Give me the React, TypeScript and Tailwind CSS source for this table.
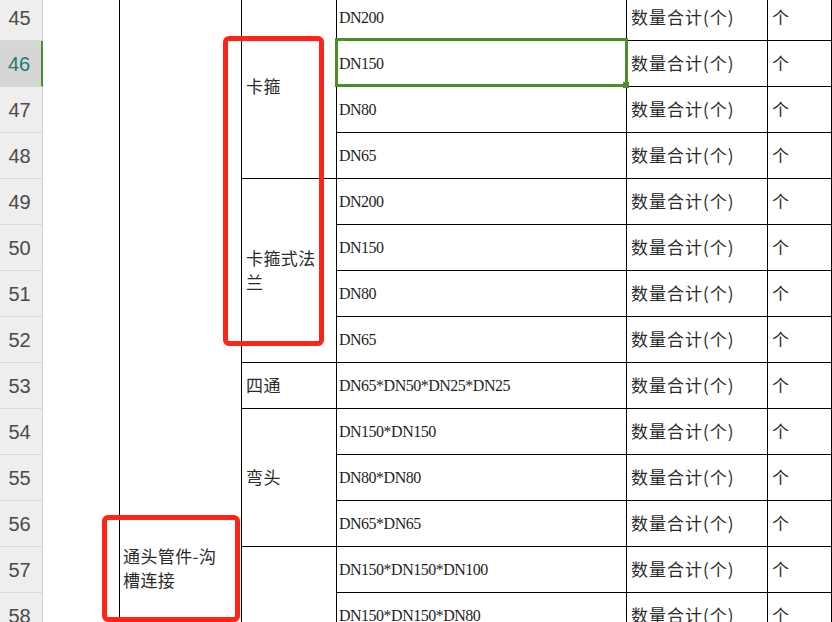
import React from "react";

const ROW_START = [
  "row-start-1",
  "row-start-2",
  "row-start-3",
  "row-start-4",
  "row-start-5",
  "row-start-6",
  "row-start-7",
  "row-start-8",
  "row-start-9",
  "row-start-10",
  "row-start-11",
  "row-start-12",
  "row-start-13",
  "row-start-14",
];

const specs = [
  "DN200",
  "DN150",
  "DN80",
  "DN65",
  "DN200",
  "DN150",
  "DN80",
  "DN65",
  "DN65*DN50*DN25*DN25",
  "DN150*DN150",
  "DN80*DN80",
  "DN65*DN65",
  "DN150*DN150*DN100",
  "DN150*DN150*DN80",
];

const latin = "font-['Liberation_Serif',serif] text-[16px] tracking-[-0.5px] text-[#1f1f1f]";
const cjk = "font-['Noto_Sans_CJK_SC','Liberation_Sans',sans-serif] text-[17px] tracking-[0.4px] text-[#2a2a2a]";
const cjkWide = "font-['Noto_Sans_CJK_SC','Liberation_Sans',sans-serif] text-[17px] tracking-[1px] text-[#2a2a2a]";

export default function App() {
  return (
    <div className="relative w-[832px] h-[622px] overflow-hidden bg-white">
      <div className="grid grid-cols-[43px_77px_122px_95px_290px_141px_64px] grid-rows-[repeat(14,46px)] mt-[-5px]">
        {specs.map((_, i) => {
          const sel = i === 1;
          return (
            <div
              key={"h" + i}
              className={
                "col-start-1 flex items-center justify-center pr-[3px] border-b border-[#d9d9d9] font-['Liberation_Sans',sans-serif] text-[20px] " +
                ROW_START[i] +
                (sel
                  ? " bg-[#d6d6d6] text-[#1d7a70] border-r-2 border-r-[#4a8f28]"
                  : " bg-[#eeeeee] text-[#4a4a4a] border-r border-r-[#d4d4d4]")
              }
            >
              {45 + i}
            </div>
          );
        })}

        <div className="col-start-2 row-start-1 row-span-14 border-r border-black" />

        <div className="col-start-3 row-start-1 row-span-14 border-r border-black flex flex-col pt-[549px] pl-[3px]">
          <div className={cjk + " leading-[24px]"}>
            通头管件-沟
            <br />
            槽连接
          </div>
        </div>

        <div className={"col-start-4 row-start-1 row-span-4 border-r border-b border-black flex items-center pl-[4px] pb-[2px] " + cjk}>
          卡箍
        </div>
        <div className={"col-start-4 row-start-5 row-span-4 border-r border-b border-black flex items-center pl-[4px] pb-[1px] leading-[24px] " + cjk}>
          <div>
            卡箍式法
            <br />兰
          </div>
        </div>
        <div className={"col-start-4 row-start-9 border-r border-b border-black flex items-center pl-[4px] pb-[2px] " + cjk}>
          四通
        </div>
        <div className={"col-start-4 row-start-10 row-span-3 border-r border-b border-black flex items-center pl-[4px] pb-[2px] " + cjk}>
          弯头
        </div>
        <div className="col-start-4 row-start-13 row-span-2 border-r border-black" />

        {specs.map((s, i) => (
          <React.Fragment key={"r" + i}>
            <div className={"col-start-5 border-r border-b border-black flex items-center pl-[2px] " + ROW_START[i] + " " + latin}>
              {s}
            </div>
            <div className={"col-start-6 border-r border-b border-black flex items-center pl-[4px] pb-[2px] " + ROW_START[i] + " " + cjkWide}>
              数量合计(个)
            </div>
            <div className={"col-start-7 border-r border-b border-black flex items-center pl-[4px] pb-[2px] " + ROW_START[i] + " " + cjk}>
              个
            </div>
          </React.Fragment>
        ))}
      </div>

      {/* selection */}
      <div className="absolute left-[335px] top-[38px] w-[293px] h-[49px] border-[3px] border-[#4a8f28]" />
      <div className="absolute left-[623px] top-[82px] w-[6px] h-[6px] bg-[#4a8f28]" />

      {/* red annotation boxes */}
      <div className="absolute left-[223px] top-[36px] w-[101px] h-[310px] border-[5px] border-[#ff2417] rounded-[6px]" />
      <div className="absolute left-[102px] top-[515px] w-[138px] h-[107px] border-[5px] border-[#ff2417] rounded-[6px]" />
    </div>
  );
}
